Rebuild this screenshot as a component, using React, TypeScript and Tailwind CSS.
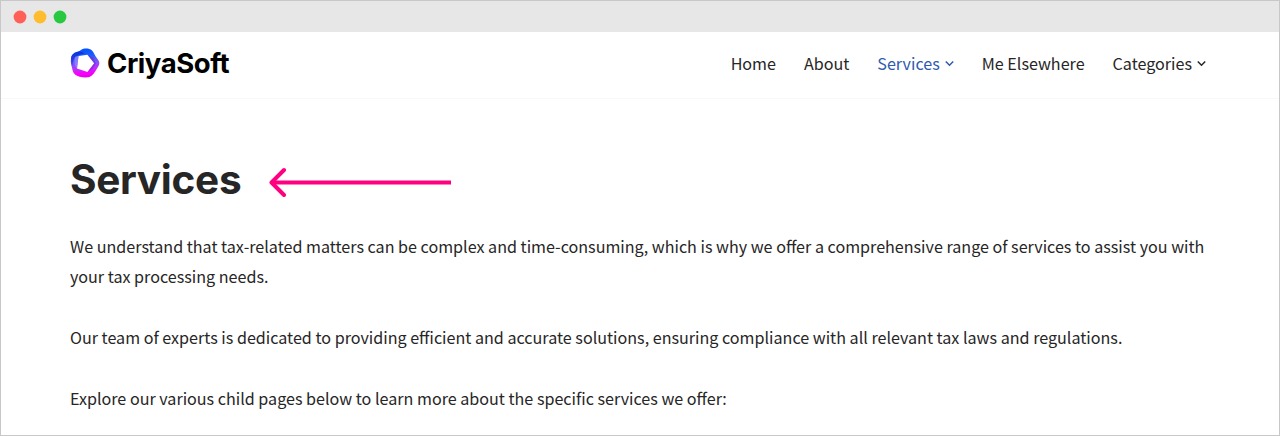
import React from 'react';

const windowDots = [
  { cx: 19, color: '#ff5f57' },
  { cx: 39, color: '#febc2e' },
  { cx: 59, color: '#28c840' },
];

const navItems = [
  { label: 'Home' },
  { label: 'About' },
  { label: 'Services', active: true, hasMenu: true },
  { label: 'Me Elsewhere' },
  { label: 'Categories', hasMenu: true },
];

const paragraphs = [
  'We understand that tax-related matters can be complex and time-consuming, which is why we offer a comprehensive range of services to assist you with your tax processing needs.',
  'Our team of experts is dedicated to providing efficient and accurate solutions, ensuring compliance with all relevant tax laws and regulations.',
  'Explore our various child pages below to learn more about the specific services we offer:',
];

function Logo() {
  return (
    <svg className="h-[30px] w-[30px]" viewBox="0 0 30 30" fill="none">
      <defs>
        <linearGradient id="ring" x1="13" y1="1" x2="16" y2="29" gradientUnits="userSpaceOnUse">
          <stop offset="0" stopColor="#0052ff" />
          <stop offset="0.25" stopColor="#1f5bfa" />
          <stop offset="0.5" stopColor="#7d58f6" />
          <stop offset="0.72" stopColor="#c02cf8" />
          <stop offset="0.85" stopColor="#fa00fb" />
          <stop offset="1" stopColor="#e800f0" />
        </linearGradient>
        <linearGradient id="edge" x1="3" y1="4" x2="4" y2="19" gradientUnits="userSpaceOnUse">
          <stop offset="0" stopColor="#0038d8" />
          <stop offset="1" stopColor="#5a38ee" />
        </linearGradient>
      </defs>
      <path
        fillRule="evenodd"
        d="M11 2C14 0 19 0 22 2.500C24 4.500 25 8 27.500 11C30 14 30 16.500 27 20.500C25 24 23 27.500 19.500 29C15 30 8 29 5 26.500C2.500 24.500 2.500 21 1.500 18C0.500 14 0.500 9 3 6.500C5 4.500 8 4.500 11 2ZM8.500 8L7 20.500L17.500 24L24.200 15.300L17.500 6.700Z"
        fill="url(#ring)"
      />
      <path d="M10 3.500C5 3.500 1 6 1 11C1 14 1.500 16 2.500 18C2.500 14 3 11 6 8.500C9 6.500 12 7 15 5Z" fill="url(#edge)" />
      <path d="M17.500 6.700L24.200 15.300L17.500 24L22 21.500L26 15.500L23 9.500Z" fill="#6a20d8" opacity="0.5" />
      <path d="M5 9C8 7 11 8 14 7L8.500 8L7 20.500C4.500 18 4 13 5 9Z" fill="#9a8cff" opacity="0.7" />
    </svg>
  );
}

export default function App() {
  return (
    <div className="flex h-[436px] w-full flex-col overflow-hidden border border-[#c8c8c8] bg-white font-['Noto_Sans_CJK_SC',sans-serif] text-[#272626]">
      {/* Window bar */}
      <div className="flex h-[31px] shrink-0 items-center bg-[#e7e7e7]">
        <svg className="h-[31px] w-[80px]" viewBox="0 0 80 31">
          {windowDots.map((dot) => (
            <circle key={dot.cx} cx={dot.cx} cy="16" r="6.400" fill={dot.color} />
          ))}
        </svg>
      </div>

      {/* Site header */}
      <header className="flex h-[67px] shrink-0 items-center justify-between border-b border-[#f8f8f8] pr-[73px] pl-[69px]">
        <a href="#" className="flex items-center gap-[7px] pb-[4px]">
          <Logo />
          <span className="pt-[2px] font-['Inter',sans-serif] text-[27.500px] leading-none font-bold tracking-[-0.45px] text-black">
            CriyaSoft
          </span>
        </a>
        <nav className="flex items-center gap-7 pb-[4px] text-[16.120px] leading-6">
          {navItems.map((item) => (
            <a
              key={item.label}
              href="#"
              className={`flex items-center whitespace-nowrap ${item.active ? 'text-[#2f5aae]' : ''}`}
            >
              {item.label}
              {item.hasMenu && (
                <svg className="mt-px ml-[5px] h-[9px] w-[9px]" viewBox="0 0 9 9" fill="none">
                  <path d="M0.800 2.500L4.500 6.200L8.200 2.500" stroke="currentColor" strokeWidth="1.500" />
                </svg>
              )}
            </a>
          ))}
        </nav>
      </header>

      {/* Page content */}
      <main className="px-[69px] pt-[56px]">
        <div className="flex items-center gap-7">
          <h1 className="font-['Inter',sans-serif] text-[40.500px] leading-[50px] font-bold tracking-[-0.3px]">
            Services
          </h1>
          <svg className="mt-[4px] h-[30px] w-[183px]" viewBox="0 0 183 30" fill="none">
            <path d="M182 15.500H2.500" stroke="#ff0080" strokeWidth="4" />
            <path
              d="M15 3L2.500 15.500L15 28"
              stroke="#ff0080"
              strokeWidth="4"
              strokeLinecap="round"
              strokeLinejoin="round"
            />
          </svg>
        </div>
        <div className="mt-[25.500px] space-y-[30.400px] text-[16.120px] leading-[30.400px]">
          {paragraphs.map((text) => (
            <p key={text}>{text}</p>
          ))}
        </div>
      </main>
    </div>
  );
}
